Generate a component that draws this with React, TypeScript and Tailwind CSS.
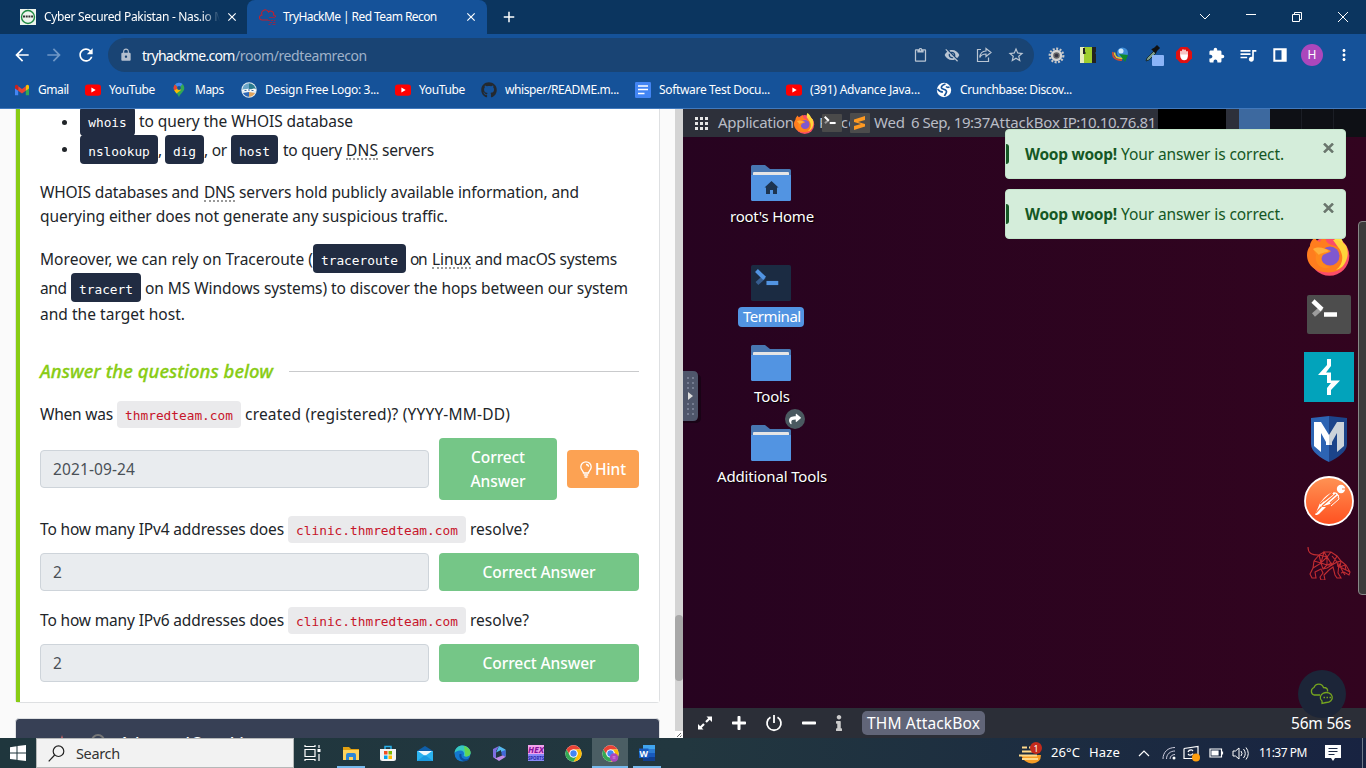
import React, { useLayoutEffect, useRef } from "react";
import {
  MdArrowBack, MdArrowForward, MdRefresh, MdLock, MdContentPaste, MdVisibilityOff,
  MdStarBorder, MdExtension, MdQueueMusic, MdMoreVert, MdAdd, MdClose,
} from "react-icons/md";
import { FaGithub, FaPlus, FaMinus, FaInfo, FaShare } from "react-icons/fa";

/* A one-line label whose letter spacing is adjusted so that it fills `w` pixels. */
function Fit({ w, className = "", children }: { w: number; className?: string; children: string }) {
  const ref = useRef<HTMLSpanElement>(null);
  useLayoutEffect(() => {
    const el = ref.current;
    if (!el) return;
    el.style.letterSpacing = "0px";
    const natural = el.getBoundingClientRect().width;
    el.style.letterSpacing = `${(w - natural) / Math.max(1, children.length - 0.5)}px`;
  }, [w, children]);
  return (
    <span className={`inline-block shrink-0 whitespace-pre ${className}`} style={{ width: w }}>
      <span ref={ref} className="inline-block">{children}</span>
    </span>
  );
}

const YouTube = () => (
  <svg width="16" height="16" viewBox="0 0 16 16"><rect y="2.4" width="16" height="11.4" rx="2.8" fill="#f00" /><path d="M6.4 5.6v5l4.3-2.5z" fill="#fff" /></svg>
);
const Gmail = () => (
  <svg width="16" height="16" viewBox="0 0 16 16">
    <path d="M1 4v9.2h3.2V7z" fill="#4285f4" /><path d="M15 4v9.2h-3.2V7z" fill="#34a853" />
    <path d="M4.2 4.2 8 7.1l3.8-2.9v4.5L8 11.5 4.2 8.7z" fill="#ea4335" />
    <path d="M1 4.5A1.5 1.5 0 0 1 3.6 3.3l.6.5v5L1 6.4z" fill="#c5221f" />
    <path d="M15 4.5a1.5 1.5 0 0 0-2.6-1.2l-.6.5v5L15 6.4z" fill="#fbbc04" />
  </svg>
);
const Maps = () => (
  <svg width="16" height="16" viewBox="0 0 16 16">
    <path d="M8 15.500C7.500 12 2.700 10 2.700 6A5.300 5.300 0 0 1 13.300 6c0 4-4.800 6-5.300 9.500z" fill="#34a853" />
    <path d="M4 2.500 8 6l3.500-4A5.300 5.300 0 0 0 4 2.500z" fill="#4285f4" /><path d="M4 2.500A5.300 5.300 0 0 0 3.600 9L7 6z" fill="#ea4335" />
    <path d="M3.300 8.500 8 5.500l2 2.500-4.500 3.500z" fill="#fbbc04" /><circle cx="8" cy="6" r="1.900" fill="#155299" />
  </svg>
);
const Design = () => (
  <svg width="16" height="16" viewBox="0 0 16 16">
    <circle cx="8" cy="8" r="7.700" fill="#dfe9ee" /><path d="M8 1.300a6.700 6.700 0 0 1 6.700 6.700H8z" fill="#2a7b8f" /><path d="M1.300 8A6.700 6.700 0 0 1 8 1.300V8z" fill="#6aa5c8" />
    <path d="M2 11a6.700 6.700 0 0 0 6 3.700V10z" fill="#2c66b5" /><path d="M8 14.700a6.700 6.700 0 0 0 6-3.700L8 10z" fill="#e0a35c" />
    <path d="M1 8c2-1.500 3 0 5-1s3 1 5 0 3-.500 4 .500-2 2.500-5 2-7 1-9-1.500z" fill="#fff" /><path d="M3.500 8.500h2M7 8h2M10.500 8.500h2" stroke="#3a6da8" strokeWidth="1.200" />
  </svg>
);
const Docs = () => (
  <svg width="16" height="16" viewBox="0 0 16 16"><rect width="16" height="16" rx="1.200" fill="#4285f4" /><path d="M3 4h10M3 7.500h10M3 11.500h6.500" stroke="#fff" strokeWidth="1.700" /></svg>
);
const Crunch = () => (
  <svg width="16" height="16" viewBox="0 0 16 16"><circle cx="8" cy="8" r="7.200" fill="#fff" /><path d="M9.500 2C6 3 5 5 5.500 6c.500 1.500 5 1 5 3.500C10.500 11.500 9 12 8.500 14M1.500 7c1.500 2 3 3 5.500 3M10 4.500c1 1 2 1 3.500.500" stroke="#155299" strokeWidth="1.700" fill="none" /></svg>
);
const Firefox = ({ s }: { s: number }) => (
  <svg width={s} height={s} viewBox="0 0 44 44">
    <circle cx="22.500" cy="24" r="19.800" fill="#fb4d68" />
    <path d="M28 0c-3 6 0 9 4 12l8 4c-1-3-3-4-4-5 0-3-4-9-8-11z" fill="#ffe14a" />
    <path d="M3 14c0-4 3-7 5-9 1 3 2 4 5 5 1-3 3-5 6-6-1 3 0 6 3 8l12 4c7 9 5 22-8 24S0 36 0 23c0-4 1-6 3-9z" fill="#ff7d1e" />
    <path d="M26 8c11-1 17 8 14 18-2 8-7 11-11 12 8-6 8-16 2-23z" fill="#ffd53a" />
    <circle cx="23" cy="24" r="9.500" fill="#8058cf" />
    <path d="M6 17c5-3 12-1 18 2-3 3-8 2-9 6-2 5 4 10 9 10-9 4-17-3-15-12z" fill="#ff8a1c" /><path d="M6 17c6-3 11-1 16 2-4 2-9 2-10 4z" fill="#ffb03a" />
  </svg>
);
const TermIcon = ({ w, h, bg, a, b }: { w: number; h: number; bg: string; a: string; b: string }) => (
  <svg width={w} height={h} viewBox="0 0 44 39" preserveAspectRatio="none">
    <rect width="44" height="39" rx="2" fill={bg} />
    <path d="m6.500 20 8-7" stroke={b} strokeWidth="4.500" /><path d="m6 6 9 8.500" stroke={a} strokeWidth="4.500" /><path d="M17 19.500h13" stroke={a} strokeWidth="4.500" />
  </svg>
);
const Folder = ({ home }: { home?: boolean }) => (
  <svg width="40" height="36" viewBox="0 0 40 36">
    <path d="M0 34V1.500Q0 0 1.500 0h12.500l5 4h19.500Q40 4 40 5.500V34z" fill="#4877b1" /><rect x="2" y="7" width="36" height="5" rx="1" fill="#e5e5e5" />
    <path d="M0 10h40v24.500q0 1.500-1.500 1.500h-37Q0 36 0 34.500z" fill="#5294e2" />
    {home && <path d="m20.500 16-7 6.500H15v6.500h4v-4h3v4h4v-6.500h1.500z" fill="#1d344f" />}
  </svg>
);
const Chrome = ({ badge }: { badge?: boolean }) => (
  <svg width="17" height="17" viewBox="0 0 48 48">
    <circle cx="24" cy="24" r="23" fill="#fff" />
    <path d="M4.100 12.500A23 23 0 0 1 43.900 12.500H24a11.500 11.500 0 0 0-10 17.200z" fill="#ea4335" />
    <path d="M43.900 12.500A23 23 0 0 1 24 47l10-17.300A11.500 11.500 0 0 0 24 12.500z" fill="#fbbc04" />
    <path d="M4.100 12.500A23 23 0 0 0 24 47l10-17.300a11.500 11.500 0 0 1-20 0z" fill="#34a853" />
    <circle cx="24" cy="24" r="11.500" fill="#fff" /><circle cx="24" cy="24" r="9" fill="#4285f4" />
    {badge && <><circle cx="34" cy="35" r="12" fill="#ab47bc" /><path d="M30 33h8M30 37h8" stroke="#d9a0e2" strokeWidth="2" /></>}
  </svg>
);

const bookmarks: { icon: React.ReactNode; label: string; w: number; slot: string }[] = [
  { icon: <Gmail />, label: "Gmail", w: 31, slot: "w-[71px]" },
  { icon: <YouTube />, label: "YouTube", w: 46, slot: "w-[86px]" },
  { icon: <Maps />, label: "Maps", w: 29, slot: "w-[70px]" },
  { icon: <Design />, label: "Design Free Logo: 3...", w: 114, slot: "w-[154px]" },
  { icon: <YouTube />, label: "YouTube", w: 46, slot: "w-[86px]" },
  { icon: <FaGithub size={16} color="#24292f" />, label: "whisper/README.m...", w: 114, slot: "w-[154px]" },
  { icon: <Docs />, label: "Software Test Docu...", w: 111, slot: "w-[151px]" },
  { icon: <YouTube />, label: "(391) Advance Java...", w: 110, slot: "w-[150px]" },
  { icon: <Crunch />, label: "Crunchbase: Discov...", w: 112, slot: "w-[150px]" },
];

const Cell = ({ children, className = "" }: { children: React.ReactNode; className?: string }) => (
  <div className={`flex h-8 w-8 shrink-0 items-center justify-center ${className}`}>{children}</div>
);

function Browser() {
  return (
    <header className="h-[109px] shrink-0 border-b border-[#4179bd] bg-[#155299] font-['Noto_Sans',sans-serif] text-[12px] text-white">
      <div className="flex h-[34px] items-center bg-[#0b355f]">
        <div className="flex h-full w-[247px] items-center rounded-br-lg pl-5">
          <svg width="16" height="16" viewBox="0 0 16 16"><rect width="16" height="16" fill="#eef5ee" /><circle cx="8" cy="8" r="6.500" fill="none" stroke="#1f8b43" strokeWidth="1.400" /><path d="M3 7.500h10" stroke="#333" strokeWidth="2" strokeDasharray="2 .7" /></svg>
          <span className="ml-2 flex w-[176px] overflow-hidden [mask-image:linear-gradient(to_right,black_158px,transparent_176px)]"><Fit w={181}>Cyber Secured Pakistan - Nas.io M</Fit></span>
          <MdClose size={14} className="ml-[5px]" />
        </div>
        <div className="flex h-full w-[240px] items-center rounded-t-lg bg-[#155299] pl-3">
          <svg width="17" height="17" viewBox="0 0 17 17" fill="none"><path d="M9 11H3a2.500 2.500 0 0 1 0-5 3.500 3.500 0 0 1 6.500-3 3 3 0 0 1 5 3c1.500 0 2 1 2 2" stroke="#c31f2d" strokeWidth="1.100" /><path d="M10 8.500h6M9 11.500h2m1 0h2m1 0h1.500M10.500 13.500H13m1 0h2.500M9.500 15.500h2m2 0h3" stroke="#8c2a4c" strokeWidth="1.200" /></svg>
          <Fit w={154} className="ml-[7px]">TryHackMe | Red Team Recon</Fit>
          <MdClose size={14} className="ml-[27px]" />
        </div>
        <MdAdd size={18} className="ml-[13px]" />
        <div className="ml-auto flex">
          <div className="flex w-[46px] items-center justify-center"><svg width="12" height="12" fill="none" stroke="#fff"><path d="m1 3 5 5 5-5" /></svg></div>
          <div className="flex w-[46px] items-center justify-center"><svg width="12" height="12" fill="none" stroke="#fff"><path d="M1 3.500h10" /></svg></div>
          <div className="flex w-[46px] items-center justify-center"><svg width="12" height="12" fill="none" stroke="#fff"><path d="M1.500 3.500h7v7h-7zM3.500 3.500v-2h7v7h-2" /></svg></div>
          <div className="flex w-[46px] items-center justify-center"><svg width="12" height="12" fill="none" stroke="#fff"><path d="m1 1 10 10M11 1 1 11" /></svg></div>
        </div>
      </div>
      <div className="flex h-[42px] items-center pl-[6px]">
        <Cell><MdArrowBack size={20} /></Cell>
        <Cell><MdArrowForward size={20} color="#6f97c6" /></Cell>
        <Cell><MdRefresh size={20} /></Cell>
        <div className="ml-[6px] flex h-[34px] w-[926px] items-center rounded-full bg-[#194474] pl-[11px] text-[14px]">
          <MdLock size={14} color="#b4bfce" />
          <Fit w={93} className="ml-[9px]">tryhackme.com</Fit><Fit w={132} className="text-[#9fb2c9]">/room/redteamrecon</Fit>
          <div className="ml-auto flex pr-[2px] text-[#b9c5d3]">
            <Cell><MdContentPaste size={15} /></Cell><Cell><MdVisibilityOff size={16} /></Cell>
            <Cell><svg width="16" height="16" viewBox="0 0 16 16" fill="none" stroke="currentColor" strokeWidth="1.200"><path d="M5 2.500H1.500v12h11v-4M10 1.500l5 4-5 4V7C7 7 5 8 3.800 10.500 4 7 6 4.200 10 4z" /></svg></Cell>
            <Cell><MdStarBorder size={18} /></Cell>
          </div>
        </div>
        <Cell className="ml-[6px]"><svg width="17" height="17" viewBox="0 0 17 17"><circle cx="8.500" cy="8.500" r="6.800" fill="none" stroke="#c9c9c9" strokeWidth="2.200" strokeDasharray="2 1.500" /><circle cx="8.500" cy="8.500" r="4.500" fill="#666" stroke="#d4d4d4" strokeWidth="2.400" /><circle cx="8.500" cy="8.500" r="1.800" fill="#334" /></svg></Cell>
        <Cell><svg width="16" height="16"><rect width="4" height="16" fill="#e8edbb" /><rect x="4" width="8" height="16" fill="#9fce2e" /><path d="M12 0h4v5l-1 1 1 1v9h-4zM3 1h2v4l1 1-1 1H3z" fill="#222" /></svg></Cell>
        <Cell><svg width="17" height="16"><circle cx="10.500" cy="6" r="5.500" fill="#3d8bd6" /><circle cx="9" cy="4" r="2.500" fill="#cde7fa" /><path d="M1 5c-1 5 3 9 9 8" stroke="#d84a2b" strokeWidth="1.600" fill="none" /><path d="M2.500 5.500c0 4 3 6 8 6" stroke="#e9c52c" strokeWidth="1.600" fill="none" /><path d="M7 7l9 1-3 7-2-3z" fill="#0f8a28" /></svg></Cell>
        <Cell className="pl-1"><svg width="19" height="22" viewBox="0 0 19 22"><path d="m1 17 1-3 7-7 2 2-7 7z" fill="#7b9d8b" stroke="#122" strokeWidth=".800" /><path d="m7.500 5.500 2-1L12 2l2 2-2.500 2.500-1 2z" fill="#111" stroke="#111" strokeWidth="1.500" /><rect x="7" y="11" width="12" height="11" rx="1" fill="#8ab4f8" /></svg></Cell>
        <Cell><svg width="16" height="16" viewBox="0 0 16 16"><path d="M4.700 0h6.600L16 4.700v6.600L11.300 16H4.700L0 11.300V4.700z" fill="#e01010" /><path d="M5 8V4.500M7 8V3M9 8V3.300M11 9V4.800" stroke="#fff" strokeWidth="1.500" strokeLinecap="round" /><path d="M4.300 7.500h7.400V10c0 2-1.500 3.300-3.500 3.300S5 12 4.300 10z" fill="#fff" /></svg></Cell>
        <Cell><MdExtension size={17} /></Cell><Cell><MdQueueMusic size={20} /></Cell>
        <Cell><svg width="14" height="14"><path d="M1.300 1.300h11.400v11.400H1.300z" fill="none" stroke="#fff" strokeWidth="2" /><path d="M8.500 1H13v12H8.500z" fill="#fff" /></svg></Cell>
        <Cell><span className="flex h-[22px] w-[22px] items-center justify-center rounded-full bg-[#ab47bc] text-[12px]">H</span></Cell>
        <Cell><MdMoreVert size={18} /></Cell>
      </div>
      <div className="flex h-[28px] items-center pl-[14px]">
        {bookmarks.map((b, i) => (
          <div key={i} className={`flex shrink-0 items-center gap-2 ${b.slot}`}>{b.icon}<Fit w={b.w}>{b.label}</Fit></div>
        ))}
      </div>
    </header>
  );
}

const Code = ({ w, pad = "pt-[5px]", className = "", children }: { w: number; pad?: string; className?: string; children: string }) => (
  <code className={`flex h-[29px] shrink-0 items-center justify-center rounded bg-[#212c42] font-['DejaVu_Sans_Mono',monospace] text-[12.8px] leading-5 text-white ${pad} ${className}`} style={{ width: w }}>{children}</code>
);
const Pink = ({ w, children }: { w: number; children: string }) => (
  <code className="mx-1 flex h-[27px] shrink-0 items-center justify-center rounded bg-[#eaeaec] pt-[2px] font-['DejaVu_Sans_Mono',monospace] text-[12.8px] leading-[19px] text-[#c7152b]" style={{ width: w }}>{children}</code>
);
const dotted = "h-[20px] leading-[20px] border-b-2 border-dotted border-[#999]";
const Answer = ({ w, children }: { w: number; children: string }) => (
  <div className="flex h-[38px] w-[389px] items-center rounded border border-[#ced4da] bg-[#e9ecef] pl-3 text-[#495057]"><Fit w={w}>{children}</Fit></div>
);
const Correct = () => (
  <button className="flex h-[38px] w-[200px] items-center justify-center rounded bg-[#75c687] font-medium text-white"><Fit w={113}>Correct Answer</Fit></button>
);

function Room() {
  return (
    <section className="flex h-full w-[683px] shrink-0 bg-[#fafafa] font-['Noto_Sans',sans-serif] text-[15.5px] leading-6 text-[#212529]">
      <div className="flex w-[675px] flex-col overflow-hidden pl-[15px]">
        <div className="h-[594px] w-[645px] shrink-0 rounded-b border border-t-0 border-[#dee0e2]">
          <div className="h-full border-l-4 border-[#88cc14] bg-white pl-5 pr-5">
            <div className="flex h-[26px] items-center">
              <span className="ml-[22px] mr-[13px] h-[5px] w-[5px] rounded-full bg-[#212529]" />
              <Code w={55} pad="pt-[3px]" className="mt-[-2px]">whois</Code><Fit w={214} className="ml-1 mt-[-2px]">to query the WHOIS database</Fit>
            </div>
            <div className="flex h-[29px] items-center">
              <span className="ml-[22px] mr-[13px] h-[5px] w-[5px] rounded-full bg-[#212529]" />
              <Code w={78}>nslookup</Code><Fit w={3}>,</Fit><Code w={39} className="ml-[4px]">dig</Code><Fit w={23}>, or</Fit>
              <Code w={47} className="ml-[4px]">host</Code><Fit w={59} className="ml-[5px]">to query</Fit><Fit w={32} className={`ml-1 ${dotted}`}>DNS</Fit><Fit w={52} className="ml-1">servers</Fit>
            </div>
            <div className="mt-4 flex h-6 items-center"><Fit w={159}>WHOIS databases and</Fit><Fit w={31} className={`ml-[5px] ${dotted}`}>DNS</Fit><Fit w={340} className="ml-1">servers hold publicly available information, and</Fit></div>
            <div className="flex h-6 items-center"><Fit w={408}>querying either does not generate any suspicious traffic.</Fit></div>
            <div className="mt-[16px] flex h-[29px] items-center"><Fit w={273}>Moreover, we can rely on Traceroute (</Fit><Code w={93}>traceroute</Code><Fit w={17} className="ml-1">on</Fit><Fit w={39} className={`ml-[5px] ${dotted}`}>Linux</Fit><Fit w={142} className="ml-1">and macOS systems</Fit></div>
            <div className="flex h-[29px] items-center"><Fit w={27}>and</Fit><Code w={70} className="ml-1">tracert</Code><Fit w={483} className="ml-1">on MS Windows systems) to discover the hops between our system</Fit></div>
            <div className="flex h-6 items-center"><Fit w={145}>and the target host.</Fit></div>
            <div className="mt-[31px] flex h-[28px] items-center"><Fit w={233} className="text-[18.5px] font-medium italic leading-7 text-[#88cc14] [-webkit-text-stroke:0.3px_#88cc14]">Answer the questions below</Fit><span className="ml-4 h-px w-[350px] bg-[#c9cacc]" /></div>
            <div className="mt-[16px] flex h-[27px] items-center leading-[23px]"><Fit w={73}>When was</Fit><Pink w={124}>thmredteam.com</Pink><Fit w={265}>created (registered)? (YYYY-MM-DD)</Fit></div>
            <div className="mt-[10px] flex h-[62px] items-center gap-[10px]">
              <Answer w={82}>2021-09-24</Answer>
              <button className="flex h-[62px] w-[118px] flex-col items-center justify-center rounded bg-[#75c687] font-medium text-white"><Fit w={54}>Correct</Fit><Fit w={55}>Answer</Fit></button>
              <button className="flex h-[38px] w-[72px] items-center justify-center gap-[3px] rounded bg-[#fca253] font-medium text-white">
                <svg width="12" height="17" viewBox="0 0 12 17" fill="none" stroke="#fff" strokeWidth="1.300"><path d="M3.500 12c0-2-2.700-3-2.700-6a5.200 5.200 0 0 1 10.400 0c0 3-2.700 4-2.700 6zM3.800 14h4.400M4.500 16h3M6 3.500c1.500 0 2.500 1 2.500 2.300" /></svg>
                <Fit w={31}>Hint</Fit>
              </button>
            </div>
            <div className="mt-[16px] flex h-[27px] items-center leading-[23px]"><Fit w={244}>To how many IPv4 addresses does</Fit><Pink w={178}>clinic.thmredteam.com</Pink><Fit w={59}>resolve?</Fit></div>
            <div className="mt-[10px] flex gap-[10px]"><Answer w={9}>2</Answer><Correct /></div>
            <div className="mt-[16px] flex h-[27px] items-center leading-[23px]"><Fit w={244}>To how many IPv6 addresses does</Fit><Pink w={178}>clinic.thmredteam.com</Pink><Fit w={59}>resolve?</Fit></div>
            <div className="mt-[10px] flex gap-[10px]"><Answer w={9}>2</Answer><Correct /></div>
          </div>
        </div>
        <div className="mt-[15px] h-[60px] w-[645px] shrink-0 rounded-t border border-[#dee0e2] bg-[#374055] pt-[15px]">
          <div className="flex items-start text-[17px] font-medium text-white">
            <svg width="8" height="15" className="ml-[42px] mt-px" fill="#e86a6a"><path d="M4 0 8 15H0z" /></svg>
            <span className="ml-[25px] h-[14px] w-[14px] rounded-full border-2 border-[#777]" />
            <Fit w={143} className="ml-[14px] mt-[-3px]">Advanced Searching</Fit>
          </div>
        </div>
      </div>
      <div className="flex w-2 flex-col bg-[#d4d4d4] pt-[506px]">
        <span className="h-[66px] w-2 rounded-full bg-[#a8a8a8]" />
        <span className="mt-auto flex h-[7px] w-2 items-end bg-white"><svg width="8" height="7" stroke="#555" strokeWidth=".900"><path d="m2 6 4-4M5 6l1.500-1.500" /></svg></span>
      </div>
    </section>
  );
}

const label = "text-[15px] text-white [text-shadow:1px_1px_1px_#000]";
const Toast = () => (
  <div className="flex h-[50px] w-[341px] items-center rounded border border-[#c3e6cb] bg-[#d4edda] text-[15.5px] leading-6 text-[#155724]">
    <span className="h-5 w-[3px] rounded-r-sm bg-[#155724]" />
    <Fit w={92} className="ml-4 font-bold">Woop woop!</Fit><Fit w={163} className="ml-1">Your answer is correct.</Fit>
    <svg width="11" height="10" viewBox="0 0 11 10" className="mb-[13px] ml-[39px]" stroke="#6a766d" strokeWidth="2.500"><path d="m1 .500 9 9M10 .500l-9 9" /></svg>
  </div>
);

function Desktop() {
  return (
    <section className="relative flex h-full w-[683px] flex-col overflow-hidden bg-linear-to-r from-[#270320] to-[#32041f] font-['Noto_Sans',sans-serif]">
      <div className="flex h-7 items-center bg-[#2d303a] text-[15px] leading-[20px] text-[#b9bcc6]">
        <svg width="13" height="13" viewBox="0 0 13 13" className="ml-3 mr-[10px]" fill="#e6e6e6"><path d="M0 0h3v3H0zM5 0h3v3H5zM10 0h3v3h-3zM0 5h3v3H0zM5 5h3v3H5zM10 5h3v3h-3zM0 10h3v3H0zM5 10h3v3H5zM10 10h3v3h-3z" /></svg>
        <Fit w={76} className="mb-[3px]">Application</Fit>
        <Firefox s={21} />
        <Fit w={45} className="mb-[3px] ml-1">Places</Fit>
        <Fit w={31} className="mb-[3px] ml-[10px]">Wed</Fit><Fit w={79} className="mb-[3px] ml-[6px]">6 Sep, 19:37</Fit><Fit w={70} className="mb-[3px]">AttackBox</Fit><Fit w={93} className="mb-[3px] ml-[3px]">IP:10.10.76.81</Fit>
        <span className="ml-[2px] h-full w-[68px] bg-black" />
        <span className="ml-[13px] h-full w-[31px] bg-[#3d699f]" />
        <span className="h-full w-8 border-r border-[#1b1e25] bg-[#0e1015]" /><span className="h-full w-8 border-r border-[#1b1e25] bg-[#0e1015]" /><span className="h-full flex-1 bg-[#0e1015]" />
      </div>
      <div className="absolute left-[139px] top-[5px]"><TermIcon w={20} h={18} bg="#4a4a4a" a="#fff" b="#999" /></div>
      <svg width="20" height="20" className="absolute left-[167px] top-[4px]"><rect width="20" height="20" rx="1" fill="#4c4c4c" /><path d="m4 6.500 11-3.500v4L8 9l7 2v2.500L4 17v-4l7-2-7-2z" fill="#ff9a22" /></svg>

      <div className="absolute left-[68px] top-[56px]"><Folder home /></div>
      <div className={`absolute left-[47px] top-[96px] ${label}`}><Fit w={84}>root's Home</Fit></div>
      <div className="absolute left-[68px] top-[156px]"><TermIcon w={40} h={36} bg="#1b2b42" a="#5294e2" b="#365d90" /></div>
      <div className="absolute left-[55px] top-[198px] flex h-5 w-[66px] items-center rounded-sm bg-[#5294e2] pl-[5px] text-[15px] text-white"><Fit w={58} className="mb-0.5">Terminal</Fit></div>
      <div className="absolute left-[68px] top-[236px]"><Folder /></div>
      <div className={`absolute left-[71px] top-[276px] ${label}`}><Fit w={36}>Tools</Fit></div>
      <div className="absolute left-[68px] top-[316px]"><Folder /></div>
      <div className="absolute left-[102px] top-[300px] flex h-5 w-5 items-center justify-center rounded-full bg-[#4a5960]"><FaShare size={12} color="#fff" /></div>
      <div className={`absolute left-[34px] top-[356px] ${label}`}><Fit w={110}>Additional Tools</Fit></div>

      <svg width="20" height="56" className="absolute left-0 top-[261px]"><path d="M0 4h12q6 0 6 5v39q0 5-6 5H0z" fill="#190316" /><path d="M0 1h10q5 0 5 5v40q0 5-5 5H0z" fill="#4f566b" /><path d="m5 22 5 4-5 4z" fill="#ddd" /><path d="M5 7v12M10 7v12M5 33v12M10 33v12" stroke="#757c91" strokeWidth="2" strokeDasharray="2 3" /></svg>

      <div className="absolute left-[624px] top-[123px]"><Firefox s={44} /></div>
      <div className="absolute left-[624px] top-[186px]"><TermIcon w={44} h={39} bg="#4d4d4d" a="#fff" b="#9d9d9d" /></div>
      <svg width="50" height="50" className="absolute left-[621px] top-[243px]"><path d="M0 0h50v50H0z" fill="#02a3bb" /><path d="M23 7h4v7l-5 6.500h5v8h9L27 38v5h-4v-7l4-5h-4v-8h-9l9-10z" fill="#fff" /></svg>
      <svg width="36" height="46" viewBox="0 0 36 46" className="absolute left-[628px] top-[307px]"><path d="M18 0c6 1 12 1 18 2v26c0 8-10 14-18 18z" fill="#1c448a" /><path d="M18 0C12 1 6 1 0 2v26c0 8 10 14 18 18z" fill="#2d64b3" /><path d="M3 6h7l8 13v10h-3v-3l-5-9v19l-7-6z" fill="#fff" /><path d="M33 6h-7l-8 13v10h3v-3l5-9v19l7-6z" fill="#ccd3da" /></svg>
      <svg width="50" height="50" viewBox="0 0 50 50" className="absolute left-[621px] top-[367px]"><defs><linearGradient id="postman" x2="0" y2="1"><stop stopColor="#ff9354" /><stop offset="1" stopColor="#ff5020" /></linearGradient></defs><circle cx="25" cy="25" r="24" fill="url(#postman)" stroke="#fff" strokeWidth="1.800" /><circle cx="37" cy="13" r="4.200" fill="#fff" /><path d="M38 13h3" stroke="#ff7b3d" /><path d="M20 22q8-8 13-5l2 3-9 8-9 3-4 6-2 2 5-12z" fill="#fff" /><path d="m16 28 13-12M18 30l14-12M20 25l9-7M24 30l-7 1-5 6M26 27l8-7" stroke="#ff7236" strokeWidth="1.200" fill="none" /><path d="M34 19l1 4-8 7" stroke="#fff" fill="none" /><path d="m11 39 7-8 4 0-7 7-2 1z" fill="#fff" /></svg>
      <svg width="44" height="34" viewBox="0 0 44 34" className="absolute left-[624px] top-[437px]" fill="none" stroke="#c22d32" strokeWidth="1.100"><path d="M1 1c0 6 3 8 11 8l5-3 7 0 6 4 4 5 5 4 4 7-1 3-5-3-3 1M12 9 7 15l-1 7-3 6 2 4h4l-1-6 6-3 2 4-3 4 1 3h4l-1-5 5-5 4-3 2 8 2 3h4l-3-5 1-9 4 8 2 3M7 15l7 2 6-6 5 8 5-9M12 9l2 8 3-11 3 5 4-5-4 5-8-2M6 22l8-5 2 6 4-4 5 0-5 3-4 1M20 11v8M14 17l6 2 5-2M25 19l5-3 4-1M25 10l5 6 1 5M34 15l-1 6 5-2-5 2-2-1M38 19l1 5 4 2M33 21l6 3" /></svg>

      <div className="absolute left-[675px] top-[112px] h-[374px] w-3 rounded-sm border border-[#888] bg-[#3b3b3b]" />
      <div className="absolute left-[322px] top-[20px] flex flex-col gap-[10px]"><Toast /><Toast /></div>

      <div className="mt-auto flex h-[30px] items-center bg-[#2b2e37] text-[15.5px] leading-6 text-white">
        <svg width="16" height="16" className="ml-[14px]"><path d="M9.500 1.500H15V7zM1 9v5.500h5.500z" fill="#fff" /><path d="m9 7 4-4M3 13l4-4" stroke="#fff" strokeWidth="2.200" /></svg>
        <FaPlus size={16} className="ml-[18px]" />
        <svg width="18" height="18" viewBox="0 0 18 18" className="ml-[18px]" fill="none" stroke="#fff" strokeWidth="1.800"><path d="M5.500 3.200a7 7 0 1 0 7 0M9 1v8" /></svg>
        <FaMinus size={16} className="ml-[18px]" /><FaInfo size={16} className="ml-[14px]" color="#ccc" />
        <span className="ml-[15px] flex h-6 w-[123px] items-center rounded-[5px] bg-[#616578] pl-[5px]"><Fit w={113}>THM AttackBox</Fit></span>
        <Fit w={60} className="ml-auto mr-[15px]">56m 56s</Fit>
      </div>
      <div className="absolute left-[615px] top-[561px] flex h-12 w-12 items-center justify-center rounded-full bg-[#1c2538]">
        <svg width="26" height="24" viewBox="0 0 26 24" fill="none" stroke="#76a51f" strokeWidth="1.300"><path d="M11 13H5a4 4 0 0 1 0-7.500 5 5 0 0 1 9.500 0c3.500 0 4.500 2 4 4M13 21.500v-2.500a6 5 0 1 1 4 1.500z" /><path d="M14.500 15.500h1.500m1.500 0H19m1.500 0H22" strokeWidth="1.600" /></svg>
      </div>
    </section>
  );
}

function Taskbar() {
  return (
    <footer className="flex h-[30px] shrink-0 items-center bg-linear-to-r from-[#1f363d] via-[#22373f] to-[#182341] font-['Noto_Sans',sans-serif] text-[12px] text-white">
      <svg width="16" height="16" className="ml-[10px] mr-[10px]" fill="#fff"><path d="M0 2.200 6.500 1.300v6.300H0zM7.500 1.100 16 0v7.600H7.500zM0 8.500h6.500v6.300L0 13.900zM7.500 8.500H16V16l-8.500-1.100z" /></svg>
      <div className="flex h-[30px] w-[258px] items-center border border-[#b5b8b8] bg-[#f2f2f2] pl-[11px] text-[14.5px] leading-6 text-[#333]">
        <svg width="17" height="17" fill="none" stroke="#222" strokeWidth="1.200"><circle cx="10.500" cy="6.200" r="5.300" /><path d="m6.700 10-6 6.300" /></svg>
        <Fit w={44} className="ml-[11px]">Search</Fit>
      </div>
      <svg width="17" height="16" className="ml-[10px]" fill="none" stroke="#fff" strokeWidth="1.200"><path d="M1 4.500h10v7H1zM1 0v1.500h10V0M1 16v-1.500h10V16M15 0v3M15 9v7" /><path d="M13.500 4h3v3h-3z" fill="#fff" stroke="none" /></svg>
      <div className="ml-[16px] flex h-full w-7 items-center justify-center border-b-2 border-[#76b9ed] pt-[2px]">
        <svg width="17" height="15"><path d="M0 1h6l2 2h8v9H0z" fill="#e2a010" /><path d="M0 4h16v10H0z" fill="#ffd35c" /><path d="M3 14V9q0-2 2-2h6q2 0 2 2v5h-3v-3H6v3z" fill="#2c86d8" /></svg>
      </div>
      <svg width="16" height="17" className="ml-[15px]"><path d="M5 4V1.500h6V4" stroke="#28b0ea" strokeWidth="1.500" fill="none" /><path d="M0 4h16v9.500q0 2.500-2.500 2.500h-11Q0 16 0 13.500z" fill="#f4f4f4" /><path d="M4 6h3.500v3.500H4z" fill="#f25022" /><path d="M8.500 6H12v3.500H8.500z" fill="#7fba00" /><path d="M4 10.500h3.500V14H4z" fill="#00a4ef" /><path d="M8.500 10.500H12V14H8.500z" fill="#ffb900" /></svg>
      <svg width="16" height="15" className="ml-[21px]"><path d="M0 5l8-5 8 5v3H0z" fill="#0f5ea8" /><path d="M0 5h16v10H0z" fill="#2bb3f0" /><path d="M1 5h14l-7 5z" fill="#f2f8fc" /><path d="m0 15 8-6 8 6z" fill="#1b9ae0" /></svg>
      <svg width="17" height="17" viewBox="0 0 17 17" className="ml-[21px]"><circle cx="8.500" cy="8.500" r="8" fill="#1478cf" /><path d="M.500 8C1 3 4.500.500 8.500.500c5 0 8 4 8 7 0 3-2 4-5 4-2 0-2-1-1.500-2 .500-2-1-4-3.500-4C3 5.500 1 7 .500 8z" fill="#37c8c0" /><path d="M10 1c4 1 6.500 4 6.500 6.500 0 3-2 4-5 4z" fill="#62d653" /><path d="M5.500 9c-1 4 2 7.500 6 7 2 0 3.500-1.500 4-2.500-4 2-9 0-8-4.500z" fill="#0c4f9e" /></svg>
      <svg width="16" height="17" viewBox="0 0 16 17" className="ml-[20px]"><path d="M8 1 2 4v8l3 2V6z" fill="#7e6ee0" /><path d="m8 1 6.500 3.500v5L10 6.500V5L5 7.500z" fill="#55b8ee" /><path d="m2 12 6 4 6.500-4V9L10 11l-5 2z" fill="#c08be6" /><path d="M14.500 5v7l-4-2.500V6.500z" fill="#4166d8" /></svg>
      <svg width="16" height="16" className="ml-[21px]"><path d="M0 0h16v9H0z" fill="#f3a2ee" /><path d="M0 9h16v7H0z" fill="#8888f8" /><text x="0" y="8" textLength="16" lengthAdjust="spacingAndGlyphs" fontSize="9" fontWeight="700" fontStyle="italic" fill="#86129a">HEX</text><text x="0" y="15" textLength="16" lengthAdjust="spacingAndGlyphs" fontSize="6" fontWeight="700" fill="#2626a8">SPORTS</text></svg>
      <span className="ml-[21px]"><Chrome /></span>
      <div className="ml-[10px] flex h-full w-9 items-center justify-center border-b-2 border-[#76b9ed] bg-[#4b5e64] pt-[2px]"><Chrome badge /></div>
      <div className="ml-[5px] flex h-full w-7 items-center justify-center border-b-2 border-[#76b9ed] pt-[2px]">
        <svg width="17" height="16"><path d="M4 0h12v4H4z" fill="#41a5ee" /><path d="M4 4h12v4H4z" fill="#2b7cd3" /><path d="M4 8h12v4H4z" fill="#185abd" /><path d="M4 12h12v4H4z" fill="#103f91" /><path d="M0 3.500h9.500v9.500H0z" fill="#185abd" /><text x=".500" y="11.500" textLength="8.500" lengthAdjust="spacingAndGlyphs" fontSize="9" fontWeight="700" fill="#fff">W</text></svg>
      </div>
      <svg width="26" height="24" className="ml-auto"><path d="M3 14h20q0 8-9 8.500Q6 22 3 14z" fill="#f59c25" /><path d="M4 6.500h5m2 0h3M4 10.500h14M1 14.500h18M4 18h16" stroke="#ffd98a" strokeWidth="2" /><circle cx="18" cy="7" r="6" fill="#c42b1c" /><text x="15.500" y="10.500" fontSize="9" fill="#fff">1</text></svg>
      <Fit w={29} className="ml-[7px] text-[13px]">26°C</Fit><Fit w={31} className="ml-[9px] text-[13px]">Haze</Fit>
      <svg width="12" height="8" className="ml-[18px]" fill="none" stroke="#fff" strokeWidth="1.200"><path d="m1 7 5-5 5 5" /></svg>
      <svg width="14" height="14" className="ml-[12px]" fill="none" stroke="#fff"><path d="M1 13C1 6 6 1.500 13 1.500M4.500 13c0-5 4-8 8.500-8M8 13c0-3 2.500-4.500 5-4.500" stroke="#ccd" /><circle cx="12" cy="12" r="1.500" fill="#fff" stroke="none" /></svg>
      <svg width="18" height="17" className="ml-[7px]" fill="none" stroke="#fff"><path d="M1 3.500v10h9M1 3.500l14-2v9M5 7q1-2.500 4-2l1 1m0 2.500q-1 2-4 1.500l-1-1" strokeWidth="1.200" /><circle cx="13" cy="12.500" r="4" fill="#ff9f0f" stroke="none" /></svg>
      <svg width="15" height="10" className="ml-[8px]" fill="none" stroke="#fff" strokeWidth="1.200"><path d="M1 1h11.500v8H1zM13.500 3.500v3" /><path d="M3 3h6v4H3z" fill="#fff" /></svg>
      <svg width="18" height="15" className="ml-[8px]" fill="none" stroke="#fff"><path d="M1 5h2.500L7 2v11L3.500 10H1zM9 5q2 2.500 0 5M11.500 3q3.500 4.500 0 9M14 1.500q4.500 6 0 12" /></svg>
      <Fit w={48} className="ml-[9px]">11:37 PM</Fit>
      <svg width="17" height="16" className="ml-[18px]" fill="#fff"><path d="M0 0h16v13h-6l-2 3-2-3H0z" /><path d="M3.500 3.500h9M3.500 6.500h9M3.500 9.500h6" stroke="#1c2a44" /></svg>
      <span className="ml-[20px] mr-[3px] h-full w-px bg-[#6f7a8a]" />
    </footer>
  );
}

export default function App() {
  return (
    <div className="flex h-[768px] w-[1366px] flex-col overflow-hidden bg-white">
      <Browser />
      <main className="flex h-[629px] shrink-0"><Room /><Desktop /></main>
      <Taskbar />
    </div>
  );
}
